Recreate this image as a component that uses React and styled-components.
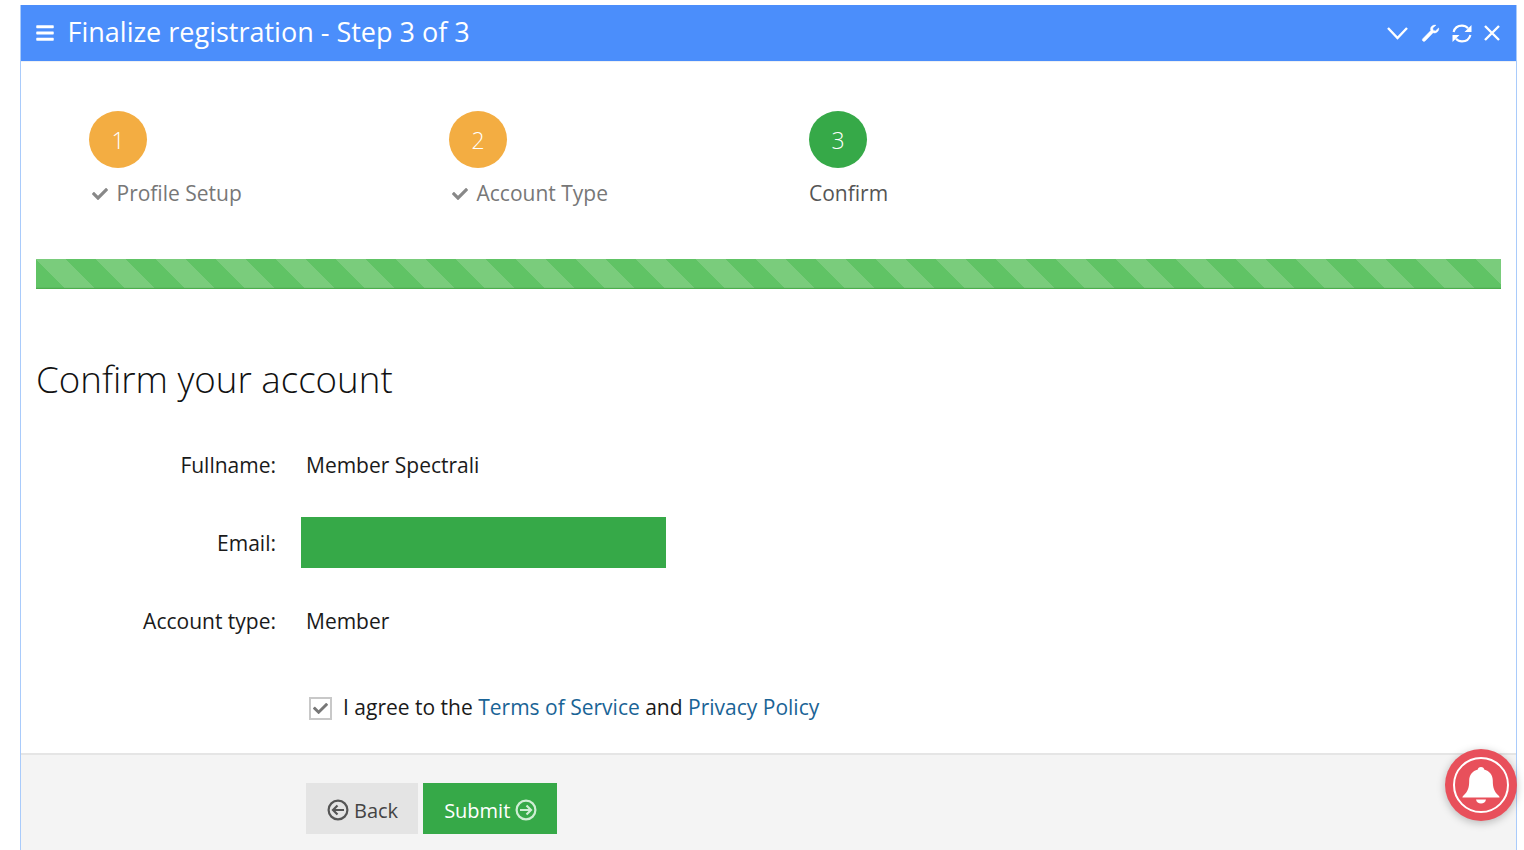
import React from 'react';
import styled, { createGlobalStyle } from 'styled-components';
import { FaBars, FaCheck } from 'react-icons/fa';

const Global = createGlobalStyle`
  html, body { margin: 0; padding: 0; height: 850px; overflow: hidden; background: #fff; }
  body { font-family: "Open Sans", "Noto Sans", sans-serif; color: #1a1a1a; }
`;

const Page = styled.div`
  width: 1497px;
  margin: 5px 0 0 20px;
  height: 845px;
  box-sizing: border-box;
  display: flex;
  flex-direction: column;
  border-left: 1px solid #a9cbfb;
  border-right: 1px solid #a9cbfb;
`;

const Header = styled.header`
  height: 56px;
  flex: none;
  background: #4b8efb;
  color: #fff;
  display: flex;
  align-items: center;
  padding: 0 16px 0 14px;
  box-shadow: 0 1px 0 #eef0f3;
`;

const Title = styled.h1`
  margin: -2px 0 0 12.5px;
  font-size: 27px;
  line-height: 56px;
  font-weight: 400;
  flex: 1;
`;

const Tools = styled.div`
  display: flex;
  align-items: center;
  gap: 12px;
`;

const Wizard = styled.div`
  display: flex;
  padding: 50px 0 0 68px;
  height: 148px;
  flex: none;
`;

const Step = styled.div`
  width: 360px;
  display: flex;
  flex-direction: column;
  align-items: flex-start;
`;

const Circle = styled.div`
  width: 58px;
  height: 57px;
  border-radius: 50%;
  background: ${p => p.$color};
  color: #fff;
  font-size: 23px;
  font-weight: 300;
  display: flex;
  align-items: center;
  justify-content: center;
`;

const StepLabel = styled.div`
  margin-top: 11px;
  font-size: 21px;
  line-height: 28px;
  color: ${p => p.$done ? '#777' : '#555'};
  display: flex;
  align-items: center;
  gap: 8.5px;
  padding-left: ${p => p.$done ? '3px' : '0'};
`;

const StepCheck = styled(FaCheck)`
  color: #888;
  font-size: 16px;
  margin-top: 2px;
`;

const Bar = styled.div`
  flex: none;
  height: 30px;
  margin: 0 15px;
  box-shadow: inset 0 -1px 0 #4cae4c, inset 0 -2px 0 rgba(0, 0, 0, .04);
  background-image: repeating-linear-gradient(
    45deg,
    #60c365 0, #60c365 21.213px,
    #7acc7c 21.213px, #7acc7c 42.426px
  );
`;

const Heading = styled.h2`
  margin: 64px 0 0 15px;
  font-size: 36.7px;
  line-height: 52px;
  font-weight: 300;
  color: #111;
`;

const Form = styled.div`
  margin-top: 33px;
  flex: 1;
  display: flex;
  flex-direction: column;
`;

const Row = styled.div`
  display: flex;
  align-items: center;
  height: 52px;
  margin-bottom: 26px;
`;

const Label = styled.div`
  width: 255px;
  text-align: right;
  font-size: 21px;
  padding-top: 2px;
`;

const Value = styled.div`
  margin-left: 30px;
  font-size: 21px;
  padding-top: 2px;
`;

const Redacted = styled.div`
  margin-left: 25px;
  width: 365px;
  height: 51px;
  background: #36a948;
`;

const Agree = styled.div`
  display: flex;
  align-items: center;
  margin: 20px 0 0 288px;
  height: 30px;
  font-size: 21px;
`;

const Check = styled.span`
  width: 19px;
  height: 19px;
  border: 2px solid #c8c8c8;
  margin-right: 11px;
  display: flex;
  align-items: center;
  justify-content: center;
  color: #777;
  font-size: 15px;
  background: #fff;
  position: relative;
  top: 1px;
`;

const Link = styled.a`
  color: #1a6496;
  text-decoration: none;
  margin: 0 5.46px;
`;

const Footer = styled.footer`
  margin-top: 31px;
  flex: 1;
  background: #f4f4f4;
  border-top: 2px solid #e5e5e5;
  padding: 28px 0 0 285px;
  display: flex;
  gap: 5px;
  align-items: flex-start;
`;

const Button = styled.button`
  height: 51px;
  border: none;
  padding: 3px 20px 0 21px;
  font: 400 20px "Open Sans", sans-serif;
  background: ${p => p.$primary ? '#36a948' : '#e4e4e4'};
  color: ${p => p.$primary ? '#fff' : '#444'};
  display: flex;
  align-items: center;
  gap: 5px;
`;

const Bell = styled.div`
  position: fixed;
  left: 1445px;
  top: 749px;
  width: 72px;
  height: 72px;
  border-radius: 50%;
  background: #e8505b;
  box-shadow: 0 2px 8px rgba(0,0,0,.25);
  display: flex;
  align-items: center;
  justify-content: center;
`;

const BellRing = styled.div`
  width: 52px;
  height: 52px;
  border-radius: 50%;
  border: 2px solid #fff;
  display: flex;
  align-items: center;
  justify-content: center;
`;

const ChevronSvg = styled.svg`
  margin-right: 1px;
`;

const Chevron = () => (
  <ChevronSvg width="21" height="14" viewBox="0 0 21 14" fill="none" stroke="#fff" strokeWidth="2.4">
    <path d="M1 2 L10.5 12 L20 2" />
  </ChevronSvg>
);

const Close = () => (
  <svg width="16" height="16" viewBox="0 0 16 16" fill="none" stroke="#fff" strokeWidth="2.4">
    <path d="M1 1 L15 15 M15 1 L1 15" />
  </svg>
);

const Wrench = () => (
  <svg width="19" height="18" viewBox="0 0 18 18" fill="#fff" stroke="#fff" strokeWidth=".5">
    <path d="M9 5.2 C9 2.6 11.6 .6 14.4 1.2 L11.2 4 L11.6 6.4 L14 6.9 L17.2 4 C17.6 6.6 15.6 9 13 9 C12.5 9 12 8.9 11.6 8.7 L3.6 17 C2.9 17.6 1.9 17.5 1.3 16.9 C.7 16.3 .7 15.3 1.3 14.7 L9.3 6.6 C9.1 6.2 9 5.7 9 5.2 Z" />
  </svg>
);

const Sync = () => (
  <svg width="20" height="19" viewBox="0 0 20 19" fill="none" stroke="#fff" strokeWidth="2.1">
    <path d="M1.6 8 C2.6 4 6 1.6 10 1.6 C12.6 1.6 14.6 2.6 16 4.2" />
    <path d="M18.4 11 C17.4 15 14 17.4 10 17.4 C7.4 17.4 5.4 16.4 4 14.8" />
    <path d="M19.5 1 V8 H12.5 Z M.5 18 V11 H7.5 Z" fill="#fff" stroke="none" />
  </svg>
);

const BellIcon = () => (
  <svg width="38" height="38" viewBox="0 0 38 38" fill="#fff">
    <path d="M19 1 C21 1 22 2.2 22.2 3.6 C27.6 5 30.8 9.2 30.8 14.6 C30.8 21.5 32 25.6 36.5 29.6 C37.2 30.2 37.6 31 37.6 31.6 H.4 C.4 31 .8 30.2 1.5 29.6 C6 25.6 7.2 21.5 7.2 14.6 C7.2 9.2 10.4 5 15.8 3.6 C16 2.2 17 1 19 1 Z" />
    <path d="M14 33.4 H24 C23.6 35.8 21.6 37.4 19 37.4 C16.4 37.4 14.4 35.8 14 33.4 Z" />
  </svg>
);

const RoundArrow = ({ dir, color }) => (
  <svg width="22" height="22" viewBox="0 0 22 22" fill="none" stroke={color} strokeWidth="2.2">
    <circle cx="11" cy="11" r="9.4" />
    {dir === 'left'
      ? <path d="M17 11 H6 M10.5 6.5 L6 11 L10.5 15.5" />
      : <path d="M5 11 H16 M11.5 6.5 L16 11 L11.5 15.5" />}
  </svg>
);

export default function App() {
  return (
    <>
      <Global />
      <Page>
        <Header>
          <FaBars size={20} />
          <Title>Finalize registration - Step 3 of 3</Title>
          <Tools>
            <Chevron />
            <Wrench />
            <Sync />
            <Close />
          </Tools>
        </Header>
        <Wizard>
          <Step>
            <Circle $color="#f3ad42">1</Circle>
            <StepLabel $done><StepCheck />Profile Setup</StepLabel>
          </Step>
          <Step>
            <Circle $color="#f3ad42">2</Circle>
            <StepLabel $done><StepCheck />Account Type</StepLabel>
          </Step>
          <Step>
            <Circle $color="#36a948">3</Circle>
            <StepLabel>Confirm</StepLabel>
          </Step>
        </Wizard>
        <Bar />
        <Heading>Confirm your account</Heading>
        <Form>
          <Row><Label>Fullname:</Label><Value>Member Spectrali</Value></Row>
          <Row><Label>Email:</Label><Redacted /></Row>
          <Row><Label>Account type:</Label><Value>Member</Value></Row>
          <Agree>
            <Check><FaCheck /></Check>
            I agree to the<Link>Terms of Service</Link>and<Link>Privacy Policy</Link>
          </Agree>
          <Footer>
            <Button><RoundArrow dir="left" color="#555" />Back</Button>
            <Button $primary>Submit<RoundArrow dir="right" color="#cfeed4" /></Button>
          </Footer>
        </Form>
      </Page>
      <Bell><BellRing><BellIcon /></BellRing></Bell>
    </>
  );
}
